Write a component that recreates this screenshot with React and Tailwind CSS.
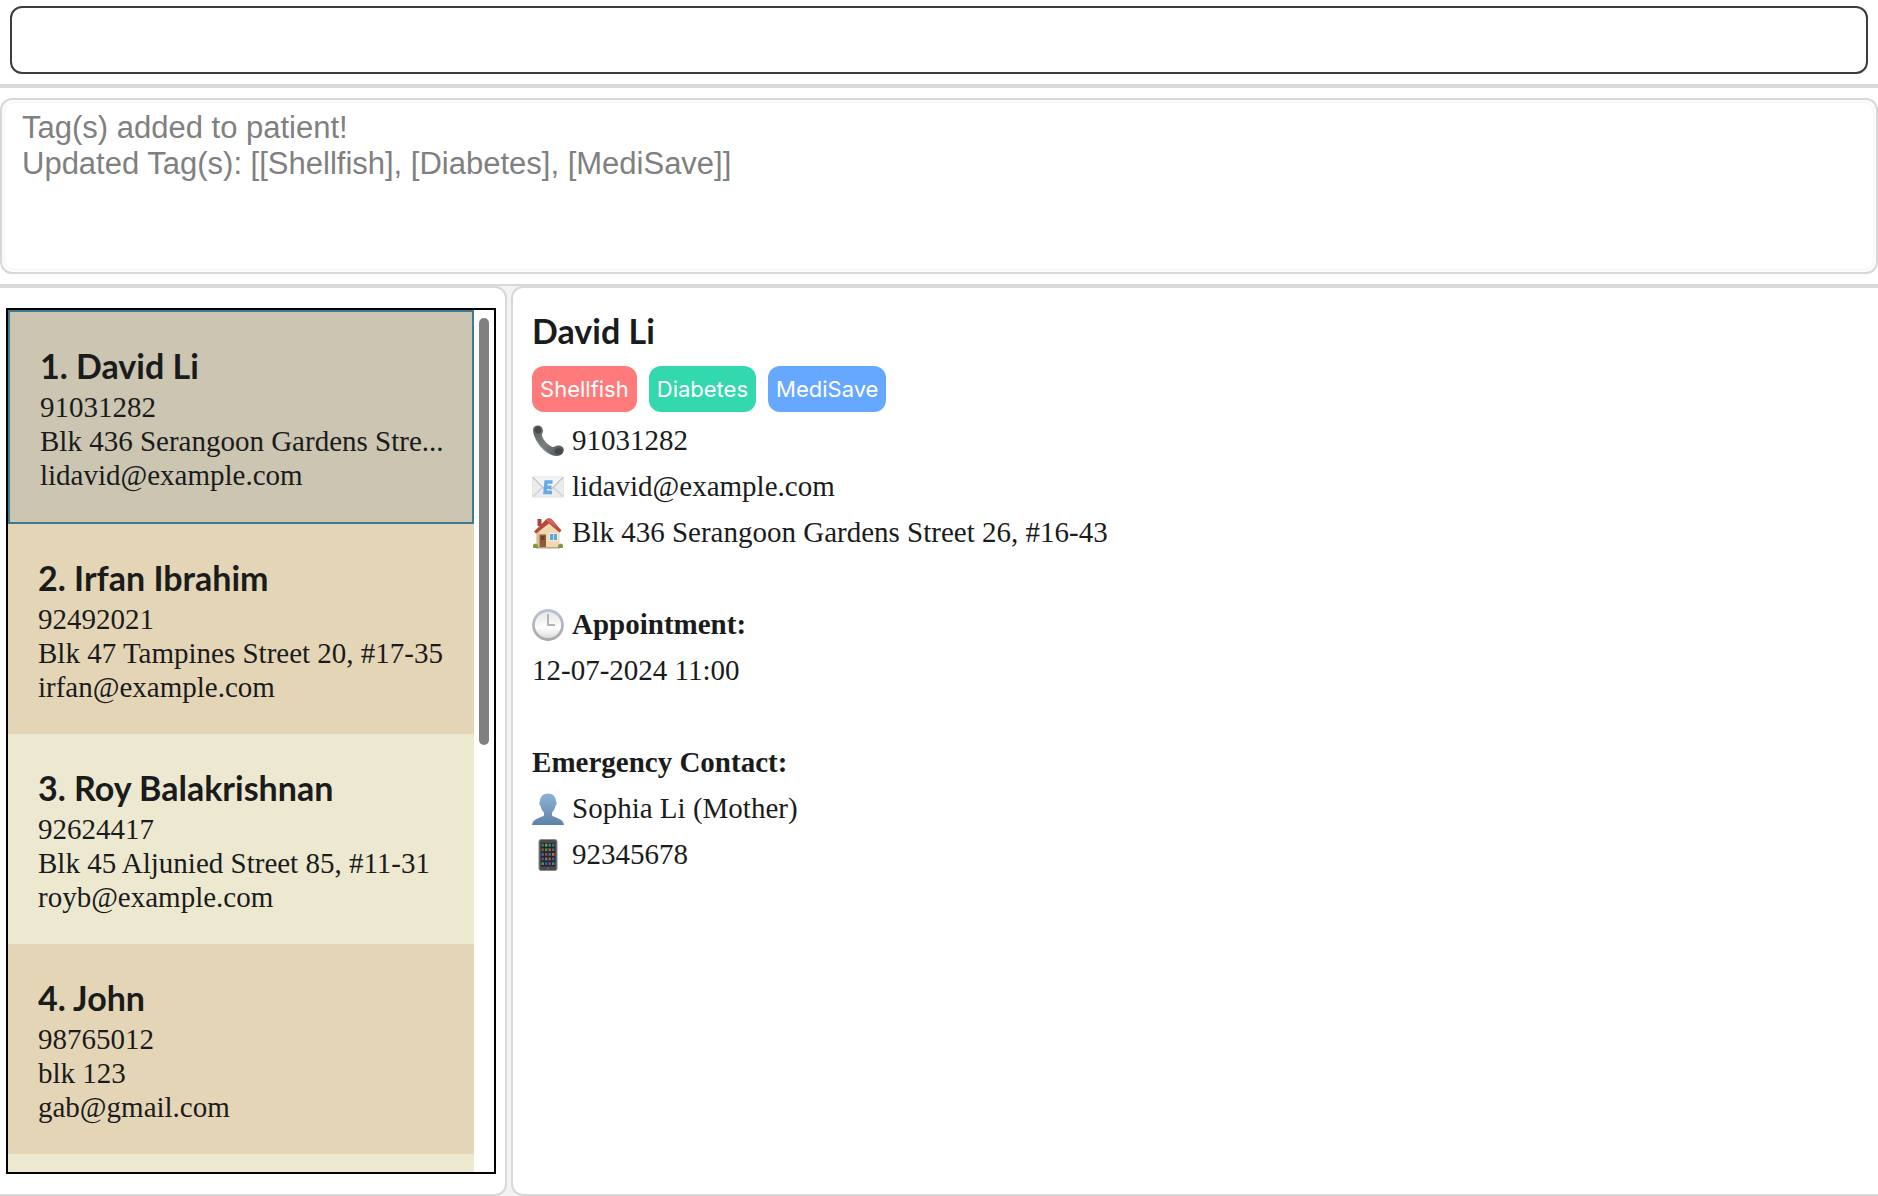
import React from "react";

const patients = [
  { name: "David Li", phone: "91031282", address: "Blk 436 Serangoon Gardens Stre...", email: "lidavid@example.com" },
  { name: "Irfan Ibrahim", phone: "92492021", address: "Blk 47 Tampines Street 20, #17-35", email: "irfan@example.com" },
  { name: "Roy Balakrishnan", phone: "92624417", address: "Blk 45 Aljunied Street 85, #11-31", email: "royb@example.com" },
  { name: "John", phone: "98765012", address: "blk 123", email: "gab@gmail.com" },
];

const tags = [
  { label: "Shellfish", color: "bg-[#ff7b7b]" },
  { label: "Diabetes", color: "bg-[#34d8ae]" },
  { label: "MediSave", color: "bg-[#66a8ff]" },
];

const SERIF = "font-['Liberation_Serif',serif] text-[29px]";
const TITLE = "font-['Lato',sans-serif] text-[34px] font-bold";

function Icon({ children }) {
  return (
    <svg viewBox="0 0 32 32" className="size-8 shrink-0" aria-hidden="true">
      {children}
    </svg>
  );
}

function ReceiverIcon() {
  return (
    <Icon>
      <defs>
        <linearGradient id="receiver" x1="0" y1="0" x2="1" y2="1">
          <stop offset="0" stopColor="#5b5e5f" />
          <stop offset="0.5" stopColor="#7b7e7f" />
          <stop offset="1" stopColor="#4b4e50" />
        </linearGradient>
      </defs>
      <path d="M1 5C1 2 3 .5 6 .5c3 0 5 2.500 5 5.500 0 2-1.500 3-1 5 1.500 4.500 6.500 9.500 10.500 11 2 .5 3-1.500 5.500-1.500 3.500 0 5.800 2 5.800 4.500 0 3-3 6-7 6C13 31 1 14 1 5z" fill="url(#receiver)" />
      <ellipse cx="6" cy="5" rx="3.200" ry="3.600" fill="#474a4c" />
      <ellipse cx="26.500" cy="26" rx="3.800" ry="3" fill="#45484a" />
      <path d="M3 12c3 7 8 13 15 16.500" stroke="#a0a2a3" strokeWidth="1" fill="none" opacity=".6" />
    </Icon>
  );
}

function MailIcon() {
  return (
    <Icon>
      <rect x=".5" y="6" width="31" height="20" fill="#ececec" stroke="#e2e2e2" />
      <path d="M1 25.500 12 15M31 25.500 20 15" stroke="#cfcfcf" strokeWidth="1.200" />
      <path d="M1 6.500 13.500 19q2.500 2 5 0L31 6.500" fill="#f3f3f3" stroke="#c6c6c6" strokeWidth="1.200" />
      <path d="M20.500 11h-6.500l-1 10.500h7M13 16.200h6.500" stroke="#64a9ec" strokeWidth="3.400" fill="none" />
    </Icon>
  );
}

function HouseIcon() {
  return (
    <Icon>
      <path d="M5.500 2h4v7h-4z" fill="#a9453c" />
      <path d="M4.500 13 16 5l11.500 8v17h-23z" fill="#f2d8ae" />
      <path d="M4.500 13v17h3V13z" fill="#dfbd8e" />
      <path d="M2 14.500 14 2.500q3-2.500 6 0l9.500 11-2 2L17 6.500 4 16.500z" fill="#b9483e" />
      <path d="M14 3q3-2 5.500 0l7.500 8.500L17 5.500z" fill="#d0695c" />
      <path d="M7.500 17.500h6.500V30H7.500z" fill="#8f5a3f" />
      <path d="M9 19h3.500v4H9z" fill="#6d3e2c" />
      <path d="M17 16h9v8h-9z" fill="#e9eef0" />
      <path d="M18 17h3.300v6H18zM22 17h3v6h-3z" fill="#5ea6d2" />
      <path d="M4 30h24v1.500H4z" fill="#b9a183" />
      <path d="M1 28q2-3 5 0v3H1zM26 28q3-3 5 0v3h-5z" fill="#7c9a4b" />
    </Icon>
  );
}

function ClockIcon() {
  return (
    <Icon>
      <defs>
        <linearGradient id="clockRim" x1="0" y1="0" x2="0" y2="1">
          <stop offset="0" stopColor="#b9c3d6" />
          <stop offset="1" stopColor="#a9a9a9" />
        </linearGradient>
        <linearGradient id="clockFace" x1="0" y1="0" x2="0" y2="1">
          <stop offset="0" stopColor="#e4e4e4" />
          <stop offset="0.600" stopColor="#ffffff" />
          <stop offset="1" stopColor="#d6d6d6" />
        </linearGradient>
      </defs>
      <circle cx="16" cy="16" r="14.500" fill="url(#clockFace)" stroke="url(#clockRim)" strokeWidth="2.800" />
      <path d="M16 5v11h7" stroke="#b4b4b4" strokeWidth="2" fill="none" />
    </Icon>
  );
}

function PersonIcon() {
  return (
    <Icon>
      <defs>
        <linearGradient id="bust" x1="0" y1="0" x2="0" y2="1">
          <stop offset="0" stopColor="#8fb3d3" />
          <stop offset="1" stopColor="#5d83a9" />
        </linearGradient>
      </defs>
      <path d="M16 .5c5 0 8 3.500 8 8 1 .5.800 3.500-.6 4.500-.5 3-1.700 5-3.400 6.500v3c1.500 2 11.500 2.500 12 9.500H0c.5-7 10.500-7.500 12-9.500v-3c-1.700-1.500-2.900-3.500-3.400-6.500C7.200 12 7 9 8 8.500c0-4.500 3-8 8-8z" fill="url(#bust)" />
    </Icon>
  );
}

const appColors = [
  "#3b7d74", "#5ba866", "#47876a", "#3f6f9c",
  "#7c5a3c", "#4c8f4a", "#a5643e", "#4f5d9c",
  "#3a6ea6", "#a83f4c", "#566a7c", "#b17a38",
  "#7b3f8c", "#3f8f9a", "#b04848", "#3d66a0",
  "#3f9a63", "#31579b", "#8a4496", "#3b8f91",
];

function MobileIcon() {
  return (
    <Icon>
      <rect x="7" y=".5" width="18" height="31" rx="2" fill="#4a4a4a" stroke="#8a8a8a" />
      <rect x="9" y="4" width="14" height="23.500" fill="#23272b" />
      {appColors.map((fill, i) => (
        <rect key={i} x={9.5 + (i % 4) * 3.5} y={4.8 + Math.floor(i / 4) * 4.6} width="2.400" height="2.800" fill={fill} />
      ))}
      <circle cx="16" cy="29.500" r="1" fill="#6c6c6c" />
    </Icon>
  );
}

function Row({ icon, bold, children }) {
  return (
    <div className="flex h-[46px] items-center gap-2">
      {icon}
      <span className={bold ? "font-bold" : ""}>{children}</span>
    </div>
  );
}

function PatientCard({ patient, index }) {
  const selected = index === 0;
  const tone = selected
    ? "border-2 border-[#3e7b91] bg-[#cbc5b1]"
    : index % 2 === 1
      ? "bg-[#e4d5b7]"
      : "bg-[#ede8d0]";
  return (
    <li aria-current={selected} className={`shrink-0 py-[30px] pr-3 pl-[30px] ${tone}`}>
      <h2 className={`${TITLE} truncate leading-[48px]`}>
        {index + 1}. {patient.name}
      </h2>
      <p className="whitespace-nowrap leading-[34px]">{patient.phone}</p>
      <p className="whitespace-nowrap leading-[34px]">{patient.address}</p>
      <p className="whitespace-nowrap leading-[34px]">{patient.email}</p>
    </li>
  );
}

export default function App() {
  return (
    <div className="flex h-screen flex-col overflow-hidden bg-[#f3f3f3] text-[#1a1c1c]">
      <div className="border-b-4 border-[#d8d8d8] bg-white px-2.5 pt-1.5 pb-2.5">
        <input
          type="text"
          aria-label="Command"
          className="block h-[68px] w-full rounded-xl border-2 border-[#3c3c3c] bg-white px-4 font-['Liberation_Sans',sans-serif] text-[31px] outline-none"
        />
      </div>

      <div className="border-b-2 border-[#d8d8d8] bg-white py-2.5">
        <div className="rounded-xl border-2 border-[#d8d8d8] bg-[#fcfcfc] p-0.5">
          <textarea
            readOnly
            aria-label="Result"
            className="block h-[168px] w-full resize-none rounded-[10px] border border-[#f4f4f4] bg-white px-[17px] py-[7px] font-['Liberation_Sans',sans-serif] text-[31px] leading-9 text-[#808080] outline-none"
            value={"Tag(s) added to patient!\nUpdated Tag(s): [[Shellfish], [Diabetes], [MediSave]]"}
          />
        </div>
      </div>

      <div className={`flex min-h-0 flex-1 gap-1 ${SERIF}`}>
        <aside className="flex w-[27%] shrink-0 flex-col rounded-r-xl border-2 border-l-0 border-[#d8d8d8] bg-white pt-5 pr-[9px] pb-5 pl-1.5">
          <div className="flex min-h-0 flex-1 border-2 border-black">
            <ul className="flex min-w-0 flex-1 flex-col overflow-hidden">
              {patients.map((patient, index) => (
                <PatientCard key={patient.name} patient={patient} index={index} />
              ))}
              <li className="min-h-0 flex-1 bg-[#ede8d0]" aria-hidden="true" />
            </ul>
            <div className="w-5 px-[5px] pt-2">
              <div className="h-1/2 rounded-full bg-[#808080]" />
            </div>
          </div>
        </aside>

        <main className="min-w-0 flex-1 rounded-l-xl border-2 border-r-0 border-[#d8d8d8] bg-white px-[19px] pt-5">
          <h1 className={`${TITLE} leading-[46px]`}>David Li</h1>
          <ul className="mt-3 mb-1.5 flex gap-3 font-['Inter',sans-serif] text-[22px] text-white">
            {tags.map((tag) => (
              <li key={tag.label} className={`flex h-[46px] items-center rounded-xl px-2 ${tag.color}`}>
                {tag.label}
              </li>
            ))}
          </ul>
          <Row icon={<ReceiverIcon />}>91031282</Row>
          <Row icon={<MailIcon />}>lidavid@example.com</Row>
          <Row icon={<HouseIcon />}>Blk 436 Serangoon Gardens Street 26, #16-43</Row>
          <div className="mt-[46px]">
            <Row icon={<ClockIcon />} bold>Appointment:</Row>
            <Row>12-07-2024 11:00</Row>
          </div>
          <div className="mt-[46px]">
            <Row bold>Emergency Contact:</Row>
            <Row icon={<PersonIcon />}>Sophia Li (Mother)</Row>
            <Row icon={<MobileIcon />}>92345678</Row>
          </div>
        </main>
      </div>
    </div>
  );
}
